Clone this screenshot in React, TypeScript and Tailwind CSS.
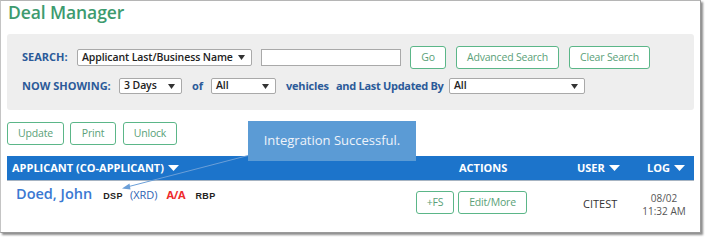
import React from 'react';

const Caret = ({ className = '' }: { className?: string }) => (
	<svg className={className} width="7" height="5" viewBox="0 0 7 5">
		<path d="M0 0 L7 0 L3.5 5 Z" fill="currentColor" />
	</svg>
);

const HeadCaret = () => (
	<svg className="ml-[4px] inline-block" width="11" height="6" viewBox="0 0 11 6">
		<path d="M0 0 L11 0 L5.5 6 Z" fill="white" />
	</svg>
);

function Select({ label, width, height = 'h-[17px]' }: { label: string; width: string; height?: string }) {
	return (
		<div
			className={`${width} ${height} flex items-center justify-between bg-white border border-[#a9a9a9] rounded-[2px] pl-[4px] pr-[6px] text-[10.5px] font-semibold text-[#222] whitespace-nowrap tracking-[-0.1px]`}
		>
			<span>{label}</span>
			<Caret className="text-[#333] shrink-0" />
		</div>
	);
}

function GreenButton({ label, width, className = '' }: { label: string; width: string; className?: string }) {
	return (
		<button
			className={`${width} h-[23px] border-[1.5px] border-[#5bb688] rounded-[3px] bg-white text-[10.5px] tracking-[-0.2px] text-[#5a9f78] whitespace-nowrap flex items-center justify-center ${className}`}
		>
			{label}
		</button>
	);
}

export default function App() {
	return (
		<div className="w-[707px] h-[241px] bg-white font-['Open_Sans',sans-serif]">
			<div className="relative w-[701px] h-[233px] border border-t-[#b5b5b5] border-l-[#c4c4c4] border-r-[#9a9a9a] border-b-[#9a9a9a] shadow-[2px_2px_2px_rgba(0,0,0,0.45)] bg-white pl-[6px]">
				<h1 className="text-[17.5px] leading-[23px] font-semibold text-[#3e9b6f] pl-[1px] tracking-[-0.1px]">Deal Manager</h1>

				<div className="mt-[10px] w-[687px] h-[76px] bg-[#eeeeee] rounded-[3px] pl-[15px] pt-[12px]">
					<div className="flex items-center h-[23px]">
						<span className="w-[55px] text-[11px] font-bold text-[#2b5a99]">SEARCH:</span>
						<Select label="Applicant Last/Business Name" width="w-[175px]" />
						<div className="ml-[9px] w-[140px] h-[17px] bg-white border border-[#a9a9a9]" />
						<GreenButton label="Go" width="w-[36px]" className="ml-[9px]" />
						<GreenButton label="Advanced Search" width="w-[103px]" className="ml-[10px]" />
						<GreenButton label="Clear Search" width="w-[81px]" className="ml-[10px]" />
					</div>
					<div className="flex items-center h-[16px] mt-[9px] text-[11px] font-bold text-[#2b5a99] whitespace-nowrap">
						<span className="w-[97px]">NOW SHOWING:</span>
						<Select label="3 Days" width="w-[63px]" height="h-[16px]" />
						<span className="ml-[10px] w-[19px]">of</span>
						<Select label="All" width="w-[65px]" height="h-[16px]" />
						<span className="ml-[10px] w-[50px] tracking-[-0.2px]">vehicles</span>
						<span className="w-[113px] tracking-[-0.3px]">and Last Updated By</span>
						<Select label="All" width="w-[136px]" height="h-[16px]" />
					</div>
				</div>

				<div className="mt-[12px] flex gap-[6px]">
					<GreenButton label="Update" width="w-[57px]" />
					<GreenButton label="Print" width="w-[46px]" />
					<GreenButton label="Unlock" width="w-[54px]" className="ml-[1px]" />
				</div>

				<div className="mt-[11px] w-[687px] h-[25px] bg-[#1c74cb] border-b border-[#a7b4c2] flex items-center text-[11px] font-bold text-white">
					<div className="w-[452px] pl-[5px] flex items-center">
						APPLICANT (CO-APPLICANT)
						<HeadCaret />
					</div>
					<div className="w-[118px]">ACTIONS</div>
					<div className="w-[70px] flex items-center">
						USER
						<HeadCaret />
					</div>
					<div className="w-[47px] flex items-center">
						LOG
						<HeadCaret />
					</div>
				</div>

				<div className="flex items-start w-[687px]">
					<div className="w-[409px] pl-[9px] pt-[3px] flex items-baseline whitespace-nowrap">
						<span className="text-[14.5px] leading-[20px] font-semibold text-[#3a78d2]">Doed, John</span>
						<span className="ml-[11px] text-[9px] font-bold tracking-[0.4px] text-[#222] font-['Liberation_Sans',sans-serif]">DSP</span>
						<span className="ml-[7px] text-[11px] text-[#2f64b3]">(XRD)</span>
						<span className="ml-[9px] text-[11px] font-bold text-[#ee2b2b] tracking-[-0.3px]">A/A</span>
						<span className="ml-[10px] text-[9px] font-bold tracking-[0.4px] text-[#222] font-['Liberation_Sans',sans-serif]">RBP</span>
					</div>
					<div className="w-[167px] pt-[10px] flex gap-[4px]">
						<GreenButton label="+FS" width="w-[38px]" />
						<GreenButton label="Edit/More" width="w-[69px]" />
					</div>
					<div className="w-[58px] pt-[15px] text-[11px] leading-[16px] text-[#333]">CITEST</div>
					<div className="w-[46px] pt-[11px] text-[10px] leading-[13px] text-[#555] text-center">
						<div>08/02</div>
						<div className="whitespace-nowrap">11:32 AM</div>
					</div>
				</div>

				<svg className="absolute left-0 top-0 pointer-events-none" width="700" height="232">
					<line x1="249" y1="154" x2="126" y2="186" stroke="#6b9fd8" strokeWidth="1" />
					<path d="M121 187.5 L128.5 182.5 L129.5 188.5 Z" fill="#6b9fd8" />
				</svg>

				<div className="absolute left-[247px] top-[120px] w-[168px] h-[40px] bg-[#5b9bd5] flex items-center justify-center text-[13px] text-[#eef3fa] whitespace-nowrap">
					Integration Successful.
				</div>
			</div>
		</div>
	);
}
